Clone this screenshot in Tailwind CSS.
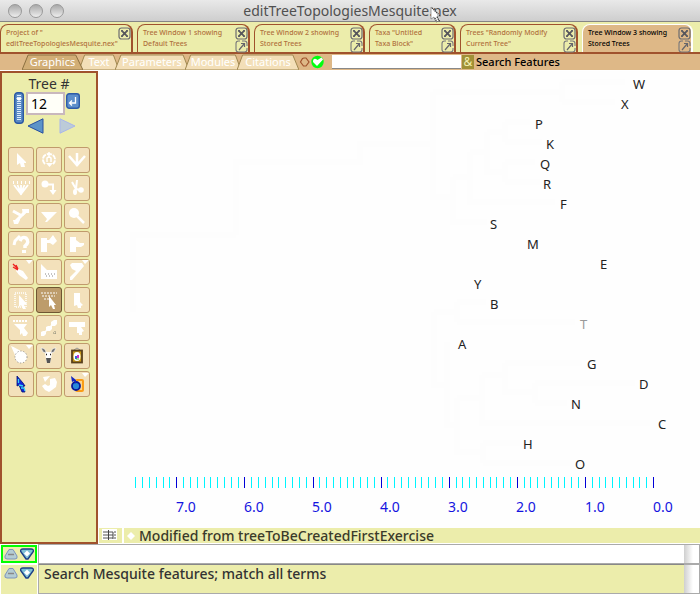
<!DOCTYPE html>
<html lang="en">
<head>
<meta charset="utf-8">
<title>editTreeTopologiesMesquite.nex</title>
<script src="https://cdn.jsdelivr.net/npm/@tailwindcss/browser@4"></script>
</head>
<body class="flex min-h-screen flex-col overflow-hidden bg-white font-['Noto_Sans',sans-serif] text-black">
<svg class="hidden">
  <symbol id="close" viewBox="0 0 13 13"><rect x="1" y="1" width="11" height="11" rx="2.500" fill="none" stroke="#6c6c70" stroke-width="1.200"/><path d="M3.700 3.700L9.300 9.300M9.300 3.700L3.700 9.300" stroke="#55555b" stroke-width="1.700"/><path d="M3 3h2v1.500H3zM8 3h2v1.500H8zM3 8.500h2V10H3zM8 8.500h2V10H8z" fill="#606066"/></symbol>
  <symbol id="pop" viewBox="0 0 13 13"><path d="M5 1H3.500Q1 1 1 3.500v6Q1 12 3.500 12h6q2.500 0 2.500-2.500V8M7 1h2.500Q12 1 12 3.500V6" fill="none" stroke="#77777b" stroke-width="1.100"/><path d="M4 10l5-6M6 3.500h3.500V7" fill="none" stroke="#66666b" stroke-width="1.200"/></symbol>
  <symbol id="up" viewBox="0 0 14 12"><path d="M5 1.500h4l4 6.500q.8 3-2 3H3q-2.800 0-2-3z" fill="#b4cdd3" stroke="#7d95bb"/><path d="M4 6.500h6" stroke="#888" stroke-width="1.500"/></symbol>
  <symbol id="down" viewBox="0 0 14 12"><path d="M3 1h8q2.800 0 2.300 2.500L8 11H6L.7 3.500Q.2 1 3 1z" fill="#7fc0d5" stroke="#1d3f86" stroke-width="1.400"/><path d="M7 2.500L10 5.500 7 8.500 4 5.500z" fill="#fff"/></symbol>
</svg>

<header class="relative flex h-[22px] items-center justify-center border-b border-[#858585] bg-linear-to-b from-[#e9e9e9] to-[#cecece]">
  <div class="absolute left-2 flex gap-[7px]">
    <button aria-label="Close" class="size-3.5 rounded-full border border-[#999] bg-linear-to-b from-[#a9a9a9] to-[#eee]"></button>
    <button aria-label="Minimize" class="size-3.5 rounded-full border border-[#999] bg-linear-to-b from-[#a9a9a9] to-[#eee]"></button>
    <button aria-label="Zoom" class="size-3.5 rounded-full border border-[#999] bg-linear-to-b from-[#a9a9a9] to-[#eee]"></button>
  </div>
  <h1 class="text-sm leading-5 text-[#505050]">editTreeTopologiesMesquite.nex</h1>
  <svg class="absolute left-[430px] top-[6px]" width="14" height="18" viewBox="0 0 14 18"><path d="M1 1v12l3-2 2 5 3-1-2-5h4z" fill="#fff" stroke="#777" stroke-width=".7"/><path d="M2 2l8 8M7 11l3 5M5 12l2 4" stroke="#333" stroke-width="1.300" stroke-dasharray="1 1"/></svg>
</header>

<nav class="flex h-8 gap-1 border-b-2 border-[#a0522d] bg-[#ecedab] pt-0.5 text-[7px] font-medium leading-[11px] text-[#b0703c]">
  <div class="flex w-[133px] justify-between rounded-t-lg border border-b-0 border-r-2 border-[#a0522d] pl-[5px] pt-0.5"><a href="#" class="whitespace-nowrap">Project of "<br>editTreeTopologiesMesquite.nex"</a><div class="-ml-1 flex shrink-0 flex-col"><button aria-label="Close"><svg width="13" height="13"><use href="#close"/></svg></button></div></div>
  <div class="flex w-[113px] justify-between rounded-t-lg border border-b-0 border-r-2 border-[#a0522d] pl-[5px] pt-0.5"><a href="#" class="whitespace-nowrap">Tree Window 1 showing<br>Default Trees</a><div class="flex flex-col"><button aria-label="Close"><svg width="13" height="13"><use href="#close"/></svg></button><button aria-label="Pop out"><svg width="13" height="13"><use href="#pop"/></svg></button></div></div>
  <div class="flex w-[111px] justify-between rounded-t-lg border border-b-0 border-r-2 border-[#a0522d] pl-[5px] pt-0.5"><a href="#" class="whitespace-nowrap">Tree Window 2 showing<br>Stored Trees</a><div class="flex flex-col"><button aria-label="Close"><svg width="13" height="13"><use href="#close"/></svg></button><button aria-label="Pop out"><svg width="13" height="13"><use href="#pop"/></svg></button></div></div>
  <div class="flex w-[87px] justify-between rounded-t-lg border border-b-0 border-r-2 border-[#a0522d] pl-[5px] pt-0.5"><a href="#" class="whitespace-nowrap">Taxa "Untitled<br>Taxa Block"</a><div class="flex flex-col"><button aria-label="Close"><svg width="13" height="13"><use href="#close"/></svg></button><button aria-label="Pop out"><svg width="13" height="13"><use href="#pop"/></svg></button></div></div>
  <div class="flex w-[118px] justify-between rounded-t-lg border border-b-0 border-r-2 border-[#a0522d] pl-[5px] pt-0.5"><a href="#" class="whitespace-nowrap">Trees "Randomly Modify<br>Current Tree"</a><div class="flex flex-col"><button aria-label="Close"><svg width="13" height="13"><use href="#close"/></svg></button><button aria-label="Pop out"><svg width="13" height="13"><use href="#pop"/></svg></button></div></div>
  <div class="flex w-[111px] justify-between rounded-t-lg border border-b-0 border-r-2 border-white bg-[#deb887] pl-[5px] pt-0.5 text-black"><a href="#" class="whitespace-nowrap">Tree Window 3 showing<br>Stored Trees</a><div class="flex flex-col"><button aria-label="Close"><svg width="13" height="13"><use href="#close"/></svg></button><button aria-label="Pop out"><svg width="13" height="13"><use href="#pop"/></svg></button></div></div>
</nav>

<div class="flex h-4 items-stretch bg-[#deb887] pl-[22px] text-[11px] leading-4 text-white">
  <button class="relative z-10 w-[61px]"><svg class="absolute inset-0 size-full" viewBox="0 0 100 16" preserveAspectRatio="none"><path d="M0 16L10 1H88L100 16z" fill="#d2ae76" stroke="#8b7040" vector-effect="non-scaling-stroke"/></svg><span class="relative">Graphics</span></button>
  <button class="relative -ml-1 w-10"><svg class="absolute inset-0 size-full" viewBox="0 0 100 16" preserveAspectRatio="none"><path d="M0 16L14 1H86L100 16z" fill="#f3dfb8" stroke="#a08850" vector-effect="non-scaling-stroke"/></svg><span class="relative">Text</span></button>
  <button class="relative -ml-1 w-[74px]"><svg class="absolute inset-0 size-full" viewBox="0 0 100 16" preserveAspectRatio="none"><path d="M0 16L8 1H92L100 16z" fill="#f3dfb8" stroke="#a08850" vector-effect="non-scaling-stroke"/></svg><span class="relative">Parameters</span></button>
  <button class="relative -ml-1 w-14"><svg class="absolute inset-0 size-full" viewBox="0 0 100 16" preserveAspectRatio="none"><path d="M0 16L10 1H90L100 16z" fill="#f3dfb8" stroke="#a08850" vector-effect="non-scaling-stroke"/></svg><span class="relative">Modules</span></button>
  <button class="relative -ml-1 w-[62px]"><svg class="absolute inset-0 size-full" viewBox="0 0 100 16" preserveAspectRatio="none"><path d="M0 16L9 1H90L100 16z" fill="#f3dfb8" stroke="#a08850" vector-effect="non-scaling-stroke"/></svg><span class="relative">Citations</span></button>
  <svg width="33" height="16" viewBox="0 0 33 16"><path d="M3.500 4.500L5 4h2l3 4-3 4H4.500L1.500 8z" fill="none" stroke="#a0522d" stroke-width="1.200"/><circle cx="18.500" cy="8" r="6.200" fill="#00ff10"/><path d="M14 8q0-4 3-3l1.500 1 4-2.500 1.500 2-6 6.500z" fill="#fff"/></svg>
  <input id="search" type="text" class="my-px w-[129px] border-b border-[#888] bg-white px-1 text-[11px] text-black outline-none">
  <button class="my-px ml-px w-3 bg-[#a09036] text-xs leading-[14px] text-[#f2efb0]">&amp;</button>
  <label for="search" class="ml-0.5 whitespace-nowrap text-[11px] font-medium leading-4 text-black">Search Features</label>
</div>

<main class="mt-px flex min-h-[473px] grow">
  <aside class="flex w-[98px] shrink-0 flex-col items-center border-2 border-[#a0522d] bg-[#ecedab]">
    <label for="tree" class="mt-0.5 text-sm leading-[17px] text-[#333]">Tree #</label>
    <div class="flex items-start gap-0.5 self-stretch pl-3">
      <svg width="10" height="32" viewBox="0 0 10 32"><rect x=".7" y=".7" width="8.600" height="30.600" rx="3" fill="#5b8bc4" stroke="#2b58a4" stroke-width="1.400"/><path d="M5 3v26" stroke="#dcebff" stroke-width="4" stroke-dasharray="1 1"/><path d="M2 6h6L5 9z" fill="#fff"/></svg>
      <div class="flex flex-col">
        <div class="flex gap-px">
          <input id="tree" type="text" value="12" class="h-[23px] w-[39px] border-2 border-[#c9b8bd] bg-[#fffff8] pl-[3px] text-sm leading-4 outline-none">
          <button aria-label="Enter" class="mt-px h-4"><svg width="14" height="16" viewBox="0 0 14 16"><rect x=".7" y=".7" width="12.600" height="14.600" rx="2.500" fill="#5d8fcb" stroke="#2d5ba8" stroke-width="1.400"/><path d="M9.500 4v6H4M6 7.500L3.500 10 6 12.500" fill="none" stroke="#fff" stroke-width="1.300"/></svg></button>
        </div>
        <div class="mt-[3px] flex gap-[15px] pl-px">
          <button aria-label="Previous tree"><svg width="17" height="16" viewBox="0 0 17 16"><path d="M1 8L16 .8v14.400z" fill="#5c94c8" stroke="#2850a0" stroke-linejoin="round"/></svg></button>
          <button aria-label="Next tree"><svg width="17" height="16" viewBox="0 0 17 16"><path d="M16 8L1 .8v14.400z" fill="#bccbd8" stroke="#a9b6ea" stroke-linejoin="round"/></svg></button>
        </div>
      </div>
    </div>
    <div class="mt-[13px] grid grid-cols-3 gap-0.5 [&>button]:size-[26px] [&>button]:rounded-[3px] [&>button]:border [&>button]:border-[#c09a6c] [&>button]:bg-[#f3e1bb]">
      <button aria-label="Arrow"><svg class="-m-px" width="26" height="26" fill="#fff"><path d="M9 6v12l3-2 1 4h4l-1-4h2v-1z"/></svg></button>
      <button aria-label="Rotate"><svg class="-m-px" width="26" height="26"><path d="M9 17C5 13 7 7 13 7s8 6 4 10" fill="none" stroke="#fff" stroke-width="2" stroke-dasharray="5 1"/><path d="M10 16h7l-3.500 4z" fill="#fff"/><path d="M11 15v-4q2-2 4 0v4M13 5v6" fill="none" stroke="#fff" stroke-width="1.500"/></svg></button>
      <button aria-label="Collapse"><svg class="-m-px" width="26" height="26"><path d="M5 9l8 9 8-9M13 6v13" fill="none" stroke="#fff" stroke-width="2.500"/></svg></button>
      <button aria-label="Polytomy"><svg class="-m-px" width="26" height="26"><path d="M6 10l7 9 7-9M9.500 10l3.500 8 3.500-8M13 10v10" fill="none" stroke="#fff" stroke-width="1.800"/><path d="M5 7.500h17" stroke="#fff" stroke-width="3" stroke-dasharray="1 3"/></svg></button>
      <button aria-label="Reroot"><svg class="-m-px" width="26" height="26"><circle cx="9" cy="9" r="3.500" fill="#fff"/><path d="M11 9.500h6V17" fill="none" stroke="#fff" stroke-width="2"/><path d="M13.500 15h7L17 20z" fill="#fff"/></svg></button>
      <button aria-label="Scissors"><svg class="-m-px" width="26" height="26"><path d="M8 7l4 7M13 5l-1 9 4 1" fill="none" stroke="#fff" stroke-width="2"/><ellipse cx="11" cy="17" rx="2" ry="3" fill="#fff"/><circle cx="17" cy="15" r="2.800" fill="#fff"/></svg></button>
      <button aria-label="Ladder"><svg class="-m-px" width="26" height="26"><path d="M5 8l9 5M7 19L17 9" fill="none" stroke="#fff" stroke-width="3"/><path d="M14 6h7v4h-3l-3 3zM5 17h3l4-3v3l-2 4H6z" fill="#fff"/></svg></button>
      <button aria-label="Triangle"><svg class="-m-px" width="26" height="26" fill="#fff"><path d="M5 9h16L11 19H9l2-3z"/></svg></button>
      <button aria-label="Magnify"><svg class="-m-px" width="26" height="26"><circle cx="10" cy="10" r="5" fill="#fff"/><path d="M13 13l7 7" stroke="#fff" stroke-width="2.500"/></svg></button>
      <button aria-label="Info"><svg class="-m-px" width="26" height="26"><path d="M6 14l1-4 5-5" fill="none" stroke="#fff" stroke-width="3"/><path d="M12 10q2-5 6-3 4 4-1 8v2" fill="none" stroke="#fff" stroke-width="3.500"/><path d="M14 19h4v3h-4z" fill="#fff"/></svg></button>
      <button aria-label="Paint"><svg class="-m-px" width="26" height="26" fill="#fff"><path d="M5 7h6v14H5zM11 9h2l4-5 4 6-4 4-3-2h-3z"/></svg></button>
      <button aria-label="Point"><svg class="-m-px" width="26" height="26" fill="#fff"><path d="M6 6h6v15H6zM12 9l4 3h4v2l-3 2h-5z"/></svg></button>
      <button aria-label="Color"><svg class="-m-px" width="26" height="26"><path d="M10 10l5 2 5 7-2 2-7-5-3-4z" fill="#fff"/><path d="M5 5l5 5M5 8l5 3M8 6l2 4" stroke="#e22" stroke-width="1.300"/><path d="M18 1h7l-4 4z" fill="#fff"/></svg></button>
      <button aria-label="Branch notes"><svg class="-m-px" width="26" height="26"><path d="M5 11V5l6 6h10v9H5z" fill="#fff"/><path d="M9 15h10M10 17h8" stroke="#888" stroke-dasharray="1 2"/></svg></button>
      <button aria-label="Root brush"><svg class="-m-px" width="26" height="26"><path d="M6 6l2-2h10l2 3-5 6-7 8H6v-3l6-6-4-2z" fill="#fff"/><path d="M18 1h7l-4 4z" fill="#fff"/></svg></button>
      <button aria-label="Select taxa"><svg class="-m-px" width="26" height="26"><path d="M7 6h11v14H7z" fill="none" stroke="#fff" stroke-width="1.500" stroke-dasharray="1 1"/><path d="M11 8v12l2-2 2 4h3l-2-4 3-1z" fill="#fff"/></svg></button>
      <button aria-label="Select branches" aria-pressed="true" class="!border-[#6f5632] !bg-[#bd9c6b]"><svg class="-m-px" width="26" height="26"><path d="M5 6h16M6 9h13M8 12h7" stroke="#fff" stroke-dasharray="2 1"/><path d="M13 9v11l2-2 2 4h2l-1-4h2z" fill="#fff"/></svg></button>
      <button aria-label="Extend"><svg class="-m-px" width="26" height="26" fill="#fff"><path d="M10 6h6v9l3 3-2 1v2h-3l-1-3-3 1z"/></svg></button>
      <button aria-label="Clade select"><svg class="-m-px" width="26" height="26"><path d="M5 6h15" stroke="#fff" stroke-width="2" stroke-dasharray="2 1"/><path d="M6 9h13l-3 4 4 5-2 3h-3l-1-3-2 2v-5z" fill="#fff"/></svg></button>
      <button aria-label="Interchange"><svg class="-m-px" width="26" height="26"><path d="M6 20L20 6" stroke="#fff" stroke-width="1.500"/><path d="M5 17l2-1h3v3l-2 2H5zM10 12l2-1h4v3l-2 2h-4zM15 7l3-2h3v4l-2 2h-4z" fill="#fff"/><path d="M17 18h4M19 16v4" stroke="#887" stroke-dasharray="1 1"/></svg></button>
      <button aria-label="Bar"><svg class="-m-px" width="26" height="26" fill="#fff"><path d="M5 7h16v5h-4l3 4-2 1v3h-3v-2h-2v-6H5z"/></svg></button>
      <button aria-label="Shape"><svg class="-m-px" width="26" height="26"><path d="M5 5l6 3-3 4z" fill="#fff" stroke="#fff" stroke-width="2"/><circle cx="13" cy="14" r="6" fill="#fff" stroke="#888" stroke-dasharray="1 2"/><path d="M18 2h7l-4 4z" fill="#fff"/></svg></button>
      <button aria-label="Ornament"><svg class="-m-px" width="26" height="26"><path d="M9 9h7l-1 7-1 4h-3l-1-4z" fill="#fff"/><path d="M5 5q5 0 5 5l-3-1zM20 5q-5 0-5 5l3-1z" fill="#777" stroke="#fff" stroke-width=".6"/><path d="M10 11.500h1M14 11.500h1" stroke="#222" stroke-width="1.500"/><path d="M10 15h5l-1 5h-3z" fill="#555"/></svg></button>
      <button aria-label="Picture"><svg class="-m-px" width="26" height="26"><path d="M10 7l3-2 3 2" fill="none" stroke="#999"/><rect x="8" y="7.500" width="10" height="12" fill="#c79818" stroke="#59401d" stroke-width="1.800"/><ellipse cx="13" cy="13.500" rx="3.500" ry="4.500" fill="#fff"/><path d="M11 13h2v3h-2z" fill="#36d"/><path d="M13 12h2v3h-2z" fill="#c3c"/><path d="M12 16h3" stroke="#4b3"/></svg></button>
      <button aria-label="Fill branches"><svg class="-m-px" width="26" height="26"><path d="M9 5v10l2-1 3 7h3l-2-6h2l-2-3z" fill="#1226d8" stroke="#001070" stroke-width=".8"/><path d="M10.500 8v4M11 14l4 1M13 17h3l1 3" fill="none" stroke="#38d4f4" stroke-width="1.300"/></svg></button>
      <button aria-label="Swap"><svg class="-m-px" width="26" height="26"><path d="M7 6l7-1-5 6zM14 8l5-1 2 4-1 5-4 3-3 2-4-2-3-4 3-2 3 2 2-1z" fill="#fff"/></svg></button>
      <button aria-label="Fill shape"><svg class="-m-px" width="26" height="26"><rect x="12" y="9" width="7" height="11" rx="1" fill="#ffd58a" stroke="#fa9c16" stroke-width="2"/><circle cx="12" cy="15" r="4" fill="#2888d8" stroke="#0a1899" stroke-width="1.800"/><path d="M7 5l1 6 2-1 2 3V9z" fill="#1426c0"/><path d="M18 2h7l-4 4z" fill="#fff"/></svg></button>
    </div>
  </aside>

  <section class="flex min-w-0 grow flex-col">
    <div class="grow overflow-hidden bg-[#fefefe]">
      <svg width="602" height="456" viewBox="98 71 602 456" role="img" aria-label="Phylogenetic tree">
        <path d="M133 312V235H236M236 235V162H360V144H433M433 92V197H453M433 92H562M562 82V102M562 82H625M562 102H615M453 177V222H487M453 177H470M470 152V202H555M470 152H487M487 132V172H505M487 132H505M505 122V142M505 122H530M505 142H542M505 162V182M505 162H535M505 182H540M434 312V385H447M434 312H457M457 302V322M457 302H486M457 322H575M447 342V425H457M457 398V452H483M457 398H482M482 375V423H650M482 375H505M505 363V392H535M505 363H582M535 383V403M535 383H635M535 403H567M483 443V463M483 443H520M483 463H570" fill="none" stroke="#fdfdfd" stroke-width="6"/>
        <g font-size="13" fill="#222">
          <text x="633" y="89">W</text><text x="621" y="109">X</text><text x="535" y="129">P</text><text x="546" y="149">K</text><text x="540" y="169">Q</text><text x="543" y="189">R</text><text x="560" y="209">F</text><text x="490" y="229">S</text><text x="527" y="249">M</text><text x="600" y="269">E</text><text x="474" y="289">Y</text><text x="490" y="309">B</text><text x="580" y="329" fill="#999">T</text><text x="458" y="349">A</text><text x="587" y="369">G</text><text x="639" y="389">D</text><text x="571" y="409">N</text><text x="658" y="429">C</text><text x="523" y="449">H</text><text x="575" y="469">O</text>
        </g>
        <g id="scale" shape-rendering="crispEdges"></g>
        <g font-size="14" fill="#1414e0">
          <text x="176" y="512">7.0</text><text x="244" y="512">6.0</text><text x="312" y="512">5.0</text><text x="380" y="512">4.0</text><text x="448" y="512">3.0</text><text x="516" y="512">2.0</text><text x="585" y="512">1.0</text><text x="653" y="512">0.0</text>
        </g>
      </svg>
    </div>
    <div class="mb-px ml-px flex h-[15px] items-center bg-[#ecedab] text-sm font-medium leading-4 text-[#3a3a2a]">
      <svg class="mr-[3px] border-r-2 border-white" width="25" height="15" viewBox="0 0 23 15"><path d="M3 1h15v11H3z" fill="#fff"/><path d="M4 4h13M4 7h13M4 10h13" stroke="#555" stroke-dasharray="10 1"/><path d="M9.500 2v10M14 4v7" stroke="#444"/></svg>
      <svg class="mr-1" width="8" height="8"><path d="M4 0L8 4 4 8 0 4z" fill="#fff"/></svg>
      <span>Modified from treeToBeCreatedFirstExercise</span>
    </div>
  </section>
</main>

<footer class="text-sm">
  <div class="flex h-5">
    <div class="mx-px mt-px flex h-[18px] w-9 items-center justify-center gap-0.5 border-2 border-[#00ff00] bg-[#ecedab]"><button aria-label="Shrink"><svg width="14" height="12"><use href="#up"/></svg></button><button aria-label="Expand"><svg width="14" height="12"><use href="#down"/></svg></button></div>
    <input type="text" aria-label="Command" class="min-w-0 grow border border-r-0 border-[#aaa] bg-white px-1 outline-none">
    <div class="w-4 border-y border-r border-[#aaa] bg-linear-to-r from-[#cfcfcf] to-white to-60%"></div>
  </div>
  <div class="flex h-[30px]">
    <div class="mx-px mt-px flex w-9 items-start justify-center gap-0.5 bg-[#ecedab] pt-0.5"><button aria-label="Shrink"><svg width="14" height="12"><use href="#up"/></svg></button><button aria-label="Expand"><svg width="14" height="12"><use href="#down"/></svg></button></div>
    <p class="grow border border-r-0 border-[#aaa] border-t-[#888] bg-[#ecedab] pl-[5px] font-medium leading-[18px] text-[#333]">Search Mesquite features; match all terms</p>
    <div class="w-4 border-y border-r border-[#aaa] bg-linear-to-r from-[#cfcfcf] to-white to-60%"></div>
  </div>
</footer>
<script>
  // Time scale: one dark tick per unit, light ticks every tenth.
  const scale = document.getElementById('scale');
  for (let i = 0; i <= 76; i++) {
    const r = document.createElementNS('http://www.w3.org/2000/svg', 'rect');
    r.setAttribute('x', Math.round(653 - i * 6.81));
    r.setAttribute('y', 477);
    r.setAttribute('width', 1);
    r.setAttribute('height', 11);
    r.setAttribute('fill', i % 10 ? '#00f5ff' : '#0000d8');
    scale.appendChild(r);
  }
</script>
</body>
</html>
